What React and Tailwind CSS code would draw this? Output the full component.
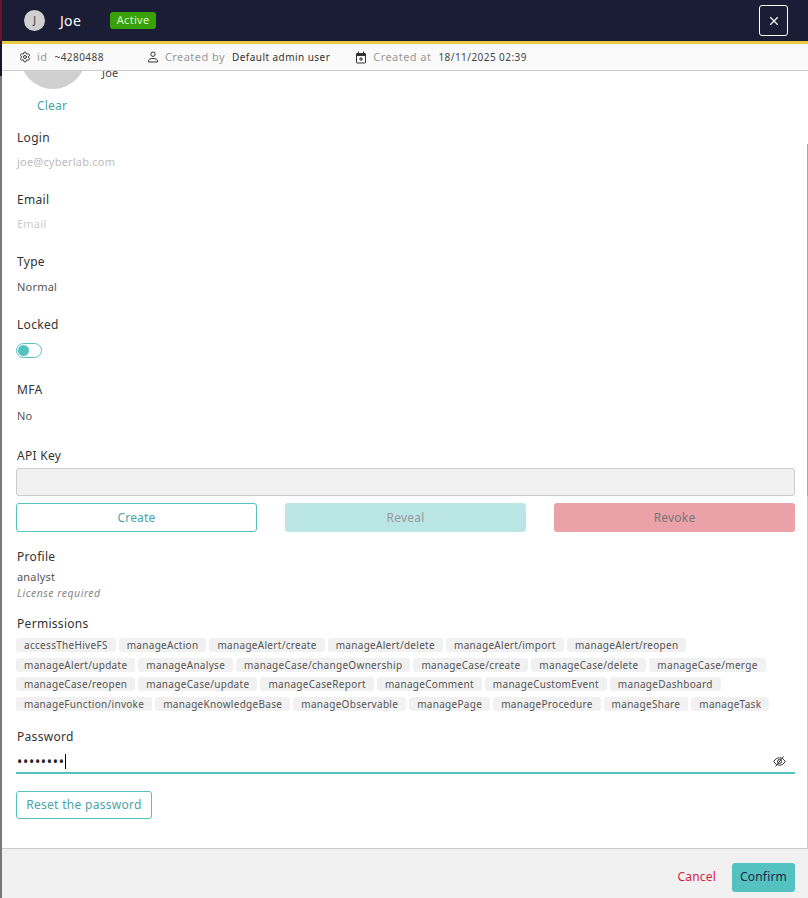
import React from "react";
import { X, Settings } from "lucide-react";

const permissions = [
  ["accessTheHiveFS", "manageAction", "manageAlert/create", "manageAlert/delete", "manageAlert/import", "manageAlert/reopen"],
  ["manageAlert/update", "manageAnalyse", "manageCase/changeOwnership", "manageCase/create", "manageCase/delete", "manageCase/merge"],
  ["manageCase/reopen", "manageCase/update", "manageCaseReport", "manageComment", "manageCustomEvent", "manageDashboard"],
  ["manageFunction/invoke", "manageKnowledgeBase", "manageObservable", "managePage", "manageProcedure", "manageShare", "manageTask"],
];

function Label({ children, className = "" }) {
  return <div className={`pl-px text-[12px] leading-4 tracking-[0.3px] text-[#333] ${className}`}>{children}</div>;
}

function Value({ children, className = "" }) {
  return <div className={`pl-px text-[11px] leading-4 tracking-[0.2px] text-[#555] ${className}`}>{children}</div>;
}

function UserIcon() {
  return (
    <svg width="12" height="12" viewBox="0 0 12 12" fill="none" stroke="#333" strokeWidth="1" className="ml-[43px] shrink-0">
      <circle cx="6" cy="3.2" r="2.2" />
      <path d="M1.5 11v-1.2c0-1.4 1.6-2.3 4.5-2.3s4.5.9 4.5 2.3V11z" />
    </svg>
  );
}

function CalendarIcon() {
  return (
    <svg width="12" height="13" viewBox="0 0 12 13" fill="none" stroke="#333" strokeWidth="1" className="ml-[25px] shrink-0">
      <rect x="1.5" y="2.5" width="9" height="9.5" rx="0.5" />
      <path d="M1.5 3h9v1.5h-9z" fill="#333" />
      <path d="M3.5 .5v2M8.5 .5v2M6 6v4M4 8h4" />
    </svg>
  );
}

function EyeSlash() {
  return (
    <svg width="13" height="11" viewBox="0 0 13 11" fill="none" stroke="#333" strokeWidth="1" className="mr-[9px]">
      <path d="M.8 5.5C2.2 3 4.2 1.8 6.5 1.8s4.3 1.2 5.7 3.7c-1.4 2.5-3.4 3.7-5.7 3.7S2.2 8 .8 5.5z" />
      <circle cx="6.5" cy="5.5" r="2" />
      <path d="M10.5.5l-8 10" />
    </svg>
  );
}

export default function App() {
  return (
    <div className="relative flex h-[898px] w-[808px] overflow-hidden bg-[#777] font-['Noto_Sans',sans-serif]">
      <div className="flex w-[2px] shrink-0 flex-col">
        <div className="h-[41px] bg-[#6d1326]" />
        <div className="h-[35px] bg-[#15172b]" />
        <div className="flex-1 bg-[#777]" />
      </div>
      <div className="flex h-full w-[806px] flex-col bg-white">
        <div className="flex h-[41px] shrink-0 items-center justify-between bg-[#1b1c36] pl-[22px] pr-[20px]">
          <div className="flex items-center">
            <div className="flex h-[21px] w-[21px] items-center justify-center rounded-full bg-[#d0d0d0] text-[10px] text-[#333]">J</div>
            <div className="ml-[15px] text-[14px] tracking-[0.3px] text-white">Joe</div>
            <div className="ml-[29px] flex h-[17px] w-[46px] items-center justify-center rounded-[3px] bg-[#38a10a] text-[11px] tracking-[0.3px] text-[#d8f5c8]">Active</div>
          </div>
          <div className="flex h-[31px] w-[29px] items-center justify-center rounded-[3px] border border-white">
            <X size={14} color="#fff" />
          </div>
        </div>
        <div className="h-[3px] shrink-0 bg-[#e8cb3e]" />
        <div className="flex h-[27px] shrink-0 items-center border-b border-[#ccc] bg-[#fafafa] pl-[17px] text-[10px] tracking-[0.45px]">
          <Settings size={12} color="#333" className="shrink-0" />
          <span className="ml-[6px] text-[11px] text-[#999]">id</span>
          <span className="ml-[7px] text-[#444]">~4280488</span>
          <UserIcon />
          <span className="ml-[6px] text-[11px] text-[#999]">Created by</span>
          <span className="ml-[7px] text-[#333]">Default admin user</span>
          <CalendarIcon />
          <span className="ml-[6px] text-[11px] text-[#999]">Created at</span>
          <span className="ml-[7px] text-[#444]">18/11/2025 02:39</span>
        </div>
        <div className="relative flex-1 overflow-hidden px-[14px]">
          <div className="absolute left-[18px] top-[-48px] h-[66px] w-[66px] rounded-full bg-[#d0d0d0]" />
          <div className="absolute left-[100px] top-[-6px] text-[11px] leading-4 tracking-[0.2px] text-[#444]">Joe</div>
          <div className="absolute left-[35px] top-[27px] text-[12px] leading-4 tracking-[0.2px] text-[#4aa5a5]">Clear</div>
          <Label className="mt-[59px]">Login</Label>
          <Value className="mt-[8px] text-[#bbb]">joe@cyberlab.com</Value>
          <Label className="mt-[22px]">Email</Label>
          <Value className="mt-[8px] text-[#ccc]">Email</Value>
          <Label className="mt-[22px]">Type</Label>
          <Value className="mt-[9px]">Normal</Value>
          <Label className="mt-[22px]">Locked</Label>
          <div className="mt-[10px] flex h-[15px] w-[26px] items-center rounded-full border border-[#55c2c2] pl-[1px]">
            <div className="h-[11px] w-[11px] rounded-full bg-[#55c2c2]" />
          </div>
          <Label className="mt-[24px]">MFA</Label>
          <Value className="mt-[10px]">No</Value>
          <Label className="mt-[24px]">API Key</Label>
          <div className="mt-[4px] h-[28px] w-[779px] rounded-[3px] border border-[#ccc] bg-[#f1f1f1]" />
          <div className="mt-[7px] flex w-[779px] justify-between text-[12px] tracking-[0.2px]">
            <div className="flex h-[29px] w-[241px] items-center justify-center rounded-[3px] border border-[#55c2c2] text-[#4aa5a5]">Create</div>
            <div className="flex h-[29px] w-[241px] items-center justify-center rounded-[3px] bg-[#bbe6e6] text-[#999]">Reveal</div>
            <div className="flex h-[29px] w-[241px] items-center justify-center rounded-[3px] bg-[#eba1a8] text-[#777]">Revoke</div>
          </div>
          <Label className="mt-[17px]">Profile</Label>
          <Value className="mt-[4px] text-[#333]">analyst</Value>
          <div className="mt-[2px] pl-px text-[10.5px] italic leading-3 tracking-[0.5px] text-[#888]">License required</div>
          <Label className="mt-[17px]">Permissions</Label>
          <div className="mt-[6px] flex flex-col gap-[5.6px]">
            {permissions.map((row, i) => (
              <div key={i} className="flex gap-[3px]">
                {row.map((p) => (
                  <span key={p} className="h-[14px] rounded-[3px] bg-[#f1f1f1] px-[8px] text-[10px] leading-[14px] tracking-[0.3px] text-[#555]">{p}</span>
                ))}
              </div>
            ))}
          </div>
          <Label className="mt-[18px]">Password</Label>
          <div className="mt-[6px] flex h-[23px] w-[779px] items-center justify-between border-b-2 border-[#55c2c2]">
            <div className="flex items-center pl-px text-[14px] tracking-[0.7px] text-[#222]">
              ••••••••
              <span className="h-[15px] w-px bg-black" />
            </div>
            <EyeSlash />
          </div>
          <div className="mt-[17px] flex h-[28px] w-[136px] items-center justify-center rounded-[3px] border border-[#55c2c2] text-[12px] tracking-[0.3px] text-[#4aa5a5]">Reset the password</div>
        </div>
        <div className="flex h-[50px] shrink-0 items-center justify-end border-t border-[#ccc] bg-[#f1f1f1] pr-[13px] pt-[7px]">
          <span className="text-[12px] tracking-[0.2px] text-[#d81f3c]">Cancel</span>
          <div className="ml-[16px] flex h-[29px] w-[63px] items-center justify-center rounded-[3px] bg-[#55c2c2] text-[12px] tracking-[0.2px] text-[#1b2a4a]">Confirm</div>
        </div>
      </div>
      <div className="absolute right-0 top-[144px] h-[352px] w-px bg-[#aaa]" />
      <div className="absolute right-0 top-[496px] h-[352px] w-px bg-[#ccc]" />
    </div>
  );
}
